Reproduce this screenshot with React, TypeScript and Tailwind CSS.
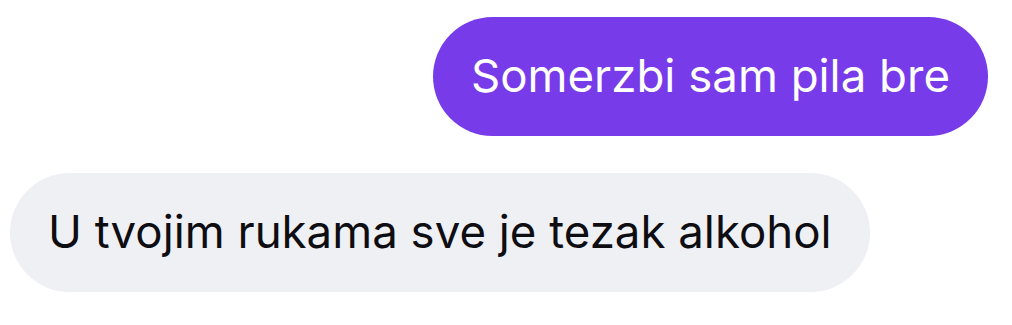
import React from 'react';

const App = () => {
  return (
    <div className="w-[1012px] h-[325px] bg-white overflow-hidden font-['Inter',sans-serif]">
      <div className="flex flex-col pt-[17px] px-[10px] pr-[24px] gap-[37px]">
        {/* Outgoing */}
        <div className="flex justify-end">
          <div className="h-[119px] flex items-center px-[38px] rounded-full bg-[#773bea] text-white text-[45.6px]">
            Somerzbi sam pila bre
          </div>
        </div>
        {/* Incoming */}
        <div className="flex justify-start">
          <div className="h-[119px] flex items-center px-[38px] rounded-full bg-[#eff0f4] text-[#0d0d12] text-[45.6px]">
            U tvojim rukama sve je tezak alkohol
          </div>
        </div>
      </div>
    </div>
  );
};

export default App;
